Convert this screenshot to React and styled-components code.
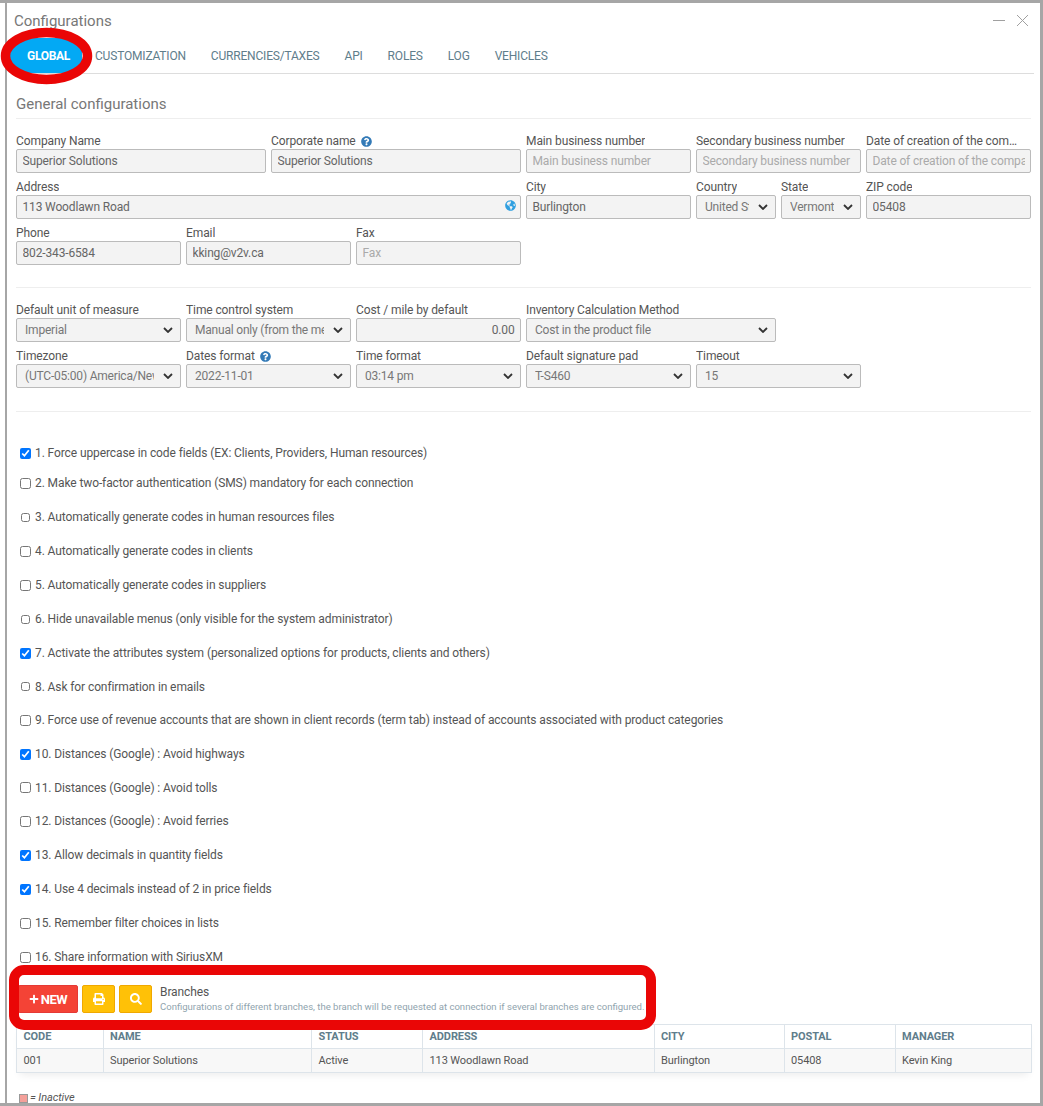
import React from "react";
import styled, { createGlobalStyle } from "styled-components";
import { FaPlus, FaPrint, FaSearch, FaQuestionCircle, FaGlobeAmericas } from "react-icons/fa";

const Global = createGlobalStyle`
  html, body { margin: 0; padding: 0; background: #fff; }
  body { font-family: Roboto, "Liberation Sans", sans-serif; font-size: 12px; color: #555; letter-spacing: -0.1px; }
  * { box-sizing: border-box; }
`;

const chevron = `url("data:image/svg+xml,%3Csvg xmlns='http://www.w3.org/2000/svg' width='10' height='6' viewBox='0 0 10 6'%3E%3Cpath d='M1 1l4 4 4-4' fill='none' stroke='%23333' stroke-width='1.8'/%3E%3C/svg%3E")`;

const Frame = styled.div`
  position: relative; width: 1043px; height: 1106px; overflow: hidden;
  border: 3px solid #a6a6a6; border-left: 0; background: #fff;
  padding: 0 9px 0 16px;
  &::before { content: ""; position: absolute; left: 5px; top: 0; bottom: 0; width: 2px; background: #a6a6a6; }
`;
const TitleBar = styled.div`
  display: flex; align-items: center; justify-content: space-between;
  height: 35px; margin-left: -2px;
`;
const Title = styled.div` font-size: 15px; color: #777; letter-spacing: 0; `;
const WinButtons = styled.div` display: flex; align-items: center; gap: 11px; color: #a0a0a0; margin-right: 2px; `;
const Tabs = styled.div`
  display: flex; align-items: flex-start; height: 36px; margin-left: -3px; margin-right: -3px;
  border-bottom: 1px solid #ddd;
`;
const Tab = styled.div`
  height: 35px; line-height: 36px; font-size: 12px; color: #607d8b; letter-spacing: -0.19px;
  padding: 0 12.5px;
`;
const ActiveTab = styled(Tab)`
  background: #03a9f4; color: #fff; font-weight: 700; border-radius: 16px 0 0 16px; width: 72px;
  padding: 0 0 0 5px; text-align: center; margin-left: -3px; margin-right: 0.5px; letter-spacing: -0.3px;
`;
const SectionTitle = styled.div`
  font-size: 15px; color: #777; height: 45px; padding-top: 21px; border-bottom: 1px solid #eee; line-height: 18px; letter-spacing: 0;
`;
const Grid = styled.div`
  display: grid; grid-template-columns: repeat(12, 80px); column-gap: 5px; row-gap: 0;
`;
const Field = styled.div` grid-column: span ${p => p.$span}; min-width: 0; height: 46px; padding-top: 14.5px; `;
const Label = styled.div`
  font-size: 12px; line-height: 15px; height: 15px; color: #555; white-space: nowrap; overflow: hidden;
  display: flex; align-items: center; gap: 5px; padding-right: 14px;
`;
const LabelText = styled.span` overflow: hidden; text-overflow: ellipsis; `;
const Input = styled.input`
  display: block; width: 100%; height: 24px; border: 1px solid #bbb; border-radius: 2px; background: #f3f3f3;
  font: 12px Roboto, sans-serif; letter-spacing: -0.15px; color: #666; padding: 0 5.5px; outline: none; text-align: ${p => p.$right ? "right" : "left"};
  &::placeholder { color: #aaa; opacity: 1; }
`;
const InputWrap = styled.div` position: relative; `;
const Globe = styled.span` position: absolute; right: 5px; top: 5px; color: #2f9fe0; display: flex; `;
const Select = styled.select`
  display: block; width: 100%; height: 24px; border: 1px solid #bbb; border-radius: 2px;
  appearance: none; background: #f3f3f3 ${chevron} no-repeat right 7px center;
  font: 12px Roboto, sans-serif; letter-spacing: -0.2px; color: #777; padding: 0 26px 0 8px; outline: none; opacity: 1;
`;
const Divider = styled.div` height: 1px; background: #eee; margin-top: ${p => p.$top}px; `;
const Checks = styled.div` padding-top: 28px; margin-left: 4px; `;
const Check = styled.label`
  display: flex; align-items: center; height: ${p => p.$h}px; font-size: 12px; color: #555; gap: 4px;
`;
const Box = styled.input`
  margin: 0 ${p => p.$small ? 1 : 0}px; width: ${p => p.$small ? 9 : 11}px; height: ${p => p.$small ? 9 : 11}px;
  accent-color: #0075ff; flex: none;
`;
const Toolbar = styled.div`
  display: flex; align-items: center; height: 30px; margin-top: 10px; margin-left: 2px; gap: 4px;
`;
const Btn = styled.button`
  height: 28px; border: 1px solid ${p => p.$red ? "#e53935" : "#f0a800"}; border-radius: 2px;
  background: ${p => p.$red ? "#f44336" : "#ffc107"}; color: #fff; font: 700 13px Roboto, sans-serif; letter-spacing: -0.4px;
  display: flex; align-items: center; justify-content: center; gap: 2px; padding: 0;
  width: ${p => p.$w}px;
`;
const ToolText = styled.div` margin-left: 4px; `;
const ToolTitle = styled.div` font-size: 12px; color: #555; line-height: 15px; `;
const ToolDesc = styled.div` font-size: 9.55px; color: #90a4ae; line-height: 14px; white-space: nowrap; letter-spacing: 0; `;
const Table = styled.table`
  width: 1015px; margin-top: 10px; border-collapse: collapse; table-layout: fixed; box-shadow: 0 6px 8px -4px rgba(0,0,0,.08);
  & th, & td { border: 1px solid #dde4ea; padding: 0 6.5px; font-size: 11px; text-align: left; }
  & th { color: #607d8b; font-weight: 700; background: #fff; height: 24px; }
  & td { color: #555; background: #f8f8f8; height: 24px; }
`;
const Legend = styled.div`
  display: flex; align-items: center; gap: 2px; margin-top: 20px; margin-left: 3px; font-size: 11px; font-style: italic; color: #555; line-height: 10px;
`;
const Swatch = styled.span` width: 9px; height: 9px; background: #f4a09a; border: 1px solid #999; `;
const Ellipse = styled.svg` position: absolute; left: 0; top: -3px; pointer-events: none; overflow: visible; `;
const RedBox = styled.div`
  position: absolute; left: 9px; top: 962px; width: 647px; height: 65px; border: 10px solid #ea0606; border-radius: 15px; pointer-events: none;
`;

const Q = () => <FaQuestionCircle size={11} color="#337ab7" />;

const row1 = [
  { s: 3, l: "Company Name", v: "Superior Solutions" },
  { s: 3, l: "Corporate name", v: "Superior Solutions", q: true },
  { s: 2, l: "Main business number", p: "Main business number" },
  { s: 2, l: "Secondary business number", p: "Secondary business number" },
  { s: 2, l: "Date of creation of the company", p: "Date of creation of the company" },
  { s: 6, l: "Address", v: "113 Woodlawn Road", g: true },
  { s: 2, l: "City", v: "Burlington" },
  { s: 1, l: "Country", o: "United States" },
  { s: 1, l: "State", o: "Vermont" },
  { s: 2, l: "ZIP code", v: "05408" },
  { s: 2, l: "Phone", v: "802-343-6584" },
  { s: 2, l: "Email", v: "kking@v2v.ca" },
  { s: 2, l: "Fax", p: "Fax" },
];
const row2 = [
  { s: 2, l: "Default unit of measure", o: "Imperial" },
  { s: 2, l: "Time control system", o: "Manual only (from the menu)" },
  { s: 2, l: "Cost / mile by default", v: "0.00", r: true },
  { s: 3, l: "Inventory Calculation Method", o: "Cost in the product file" },
  { s: 3, sp: true },
  { s: 2, l: "Timezone", o: "(UTC-05:00) America/New_York" },
  { s: 2, l: "Dates format", o: "2022-11-01", q: true },
  { s: 2, l: "Time format", o: "03:14 pm" },
  { s: 2, l: "Default signature pad", o: "T-S460" },
  { s: 2, l: "Timeout", o: "15" },
];
const checks = [
  [1, "Force uppercase in code fields (EX: Clients, Providers, Human resources)", 1, 26],
  [2, "Make two-factor authentication (SMS) mandatory for each connection", 0, 34],
  [3, "Automatically generate codes in human resources files", 0, 34, true],
  [4, "Automatically generate codes in clients", 0, 34],
  [5, "Automatically generate codes in suppliers", 0, 34],
  [6, "Hide unavailable menus (only visible for the system administrator)", 0, 34, true],
  [7, "Activate the attributes system (personalized options for products, clients and others)", 1, 34],
  [8, "Ask for confirmation in emails", 0, 33.5, true],
  [9, "Force use of revenue accounts that are shown in client records (term tab) instead of accounts associated with product categories", 0, 33.5],
  [10, "Distances (Google) : Avoid highways", 1, 34],
  [11, "Distances (Google) : Avoid tolls", 0, 33.5],
  [12, "Distances (Google) : Avoid ferries", 0, 33.5],
  [13, "Allow decimals in quantity fields", 1, 34],
  [14, "Use 4 decimals instead of 2 in price fields", 1, 34],
  [15, "Remember filter choices in lists", 0, 34],
  [16, "Share information with SiriusXM", 0, 34],
];
const cols = [86.5, 208.5, 111, 231.5, 130, 111, 136.5];
const heads = ["CODE", "NAME", "STATUS", "ADDRESS", "CITY", "POSTAL", "MANAGER"];
const cells = ["001", "Superior Solutions", "Active", "113 Woodlawn Road", "Burlington", "05408", "Kevin King"];

const renderField = (f, i) => {
  if (f.sp) return <Field key={i} $span={f.s} />;
  return (
    <Field key={i} $span={f.s}>
      <Label><LabelText>{f.l}</LabelText>{f.q && <Q />}</Label>
      {f.o ? (
        <Select disabled defaultValue={f.o}><option>{f.o}</option></Select>
      ) : (
        <InputWrap>
          <Input readOnly defaultValue={f.v} placeholder={f.p} $right={f.r} />
          {f.g && <Globe><FaGlobeAmericas size={11} /></Globe>}
        </InputWrap>
      )}
    </Field>
  );
};

export default function App() {
  return (
    <>
      <Global />
      <Frame>
        <TitleBar>
          <Title>Configurations</Title>
          <WinButtons>
            <svg width="12" height="12" viewBox="0 0 12 12"><path d="M0 5.5h12" stroke="currentColor" strokeWidth="1" /></svg>
            <svg width="13" height="13" viewBox="0 0 13 13"><path d="M1 1l11 11M12 1L1 12" stroke="currentColor" strokeWidth="1" fill="none" /></svg>
          </WinButtons>
        </TitleBar>
        <Tabs>
          <ActiveTab>GLOBAL</ActiveTab>
          <Tab>CUSTOMIZATION</Tab>
          <Tab>CURRENCIES/TAXES</Tab>
          <Tab>API</Tab>
          <Tab>ROLES</Tab>
          <Tab>LOG</Tab>
          <Tab>VEHICLES</Tab>
        </Tabs>
        <SectionTitle>General configurations</SectionTitle>
        <Grid>{row1.map(renderField)}</Grid>
        <Divider $top={30} />
        <Grid>{row2.map(renderField)}</Grid>
        <Divider $top={31} />
        <Checks>
          {checks.map(([n, t, c, h, small]) => (
            <Check key={n} $h={h}>
              <Box type="checkbox" defaultChecked={!!c} $small={small} />
              {n}. {t}
            </Check>
          ))}
        </Checks>
        <Toolbar>
          <Btn $red $w={60}><FaPlus size={10} />NEW</Btn>
          <Btn $w={33}><FaPrint size={12} /></Btn>
          <Btn $w={33}><FaSearch size={12} /></Btn>
          <ToolText>
            <ToolTitle>Branches</ToolTitle>
            <ToolDesc>Configurations of different branches, the branch will be requested at connection if several branches are configured.</ToolDesc>
          </ToolText>
        </Toolbar>
        <Table>
          <colgroup>{cols.map((w, i) => <col key={i} style={{ width: w }} />)}</colgroup>
          <thead><tr>{heads.map(h => <th key={h}>{h}</th>)}</tr></thead>
          <tbody><tr>{cells.map((c, i) => <td key={i}>{c}</td>)}</tr></tbody>
        </Table>
        <Legend><Swatch />= Inactive</Legend>
        <Ellipse width="110" height="90" viewBox="0 0 110 90">
          <ellipse cx="46.5" cy="56" rx="41" ry="23.5" fill="none" stroke="#ea0606" strokeWidth="9.5" />
        </Ellipse>
        <RedBox />
      </Frame>
    </>
  );
}
